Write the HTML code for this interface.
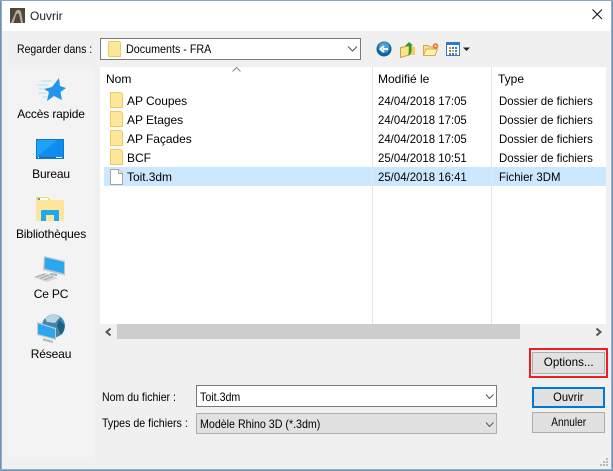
<!DOCTYPE html>
<html><head><meta charset="utf-8">
<style>
html,body{margin:0;padding:0;width:613px;height:471px;overflow:hidden;background:#f0f0f0}
body{position:relative;font-family:"Liberation Sans",sans-serif;font-size:12px;color:#000}
.a{position:absolute}
.t{position:absolute;white-space:nowrap;line-height:14px;height:14px;transform-origin:0 50%}
.d{transform:scaleX(.95)}
.n{letter-spacing:-.05px}
.l{transform:scaleX(.885)}
.c{position:absolute;white-space:nowrap;line-height:14px;height:14px;text-align:center;width:94px;left:4px;letter-spacing:-.15px}
.btn{position:absolute;box-sizing:border-box;left:532px;width:73px;background:#e1e1e1;border:1px solid #adadad;text-align:center}
.btn span{display:inline-block}
svg{position:absolute;overflow:visible}
</style></head><body>
<div class="a" style="left:0;top:0;width:613px;height:31px;background:#fff"></div>
<div class="a" style="left:0;top:0;width:1px;height:471px;background:#6f93b5"></div>
<div class="a" style="left:1px;top:0;width:1px;height:471px;background:#94aec6"></div>
<div class="a" style="right:0;top:0;width:1px;height:471px;background:#6f93b5"></div>
<div class="a" style="right:1px;top:0;width:1px;height:471px;background:#94aec6"></div>
<div class="a" style="left:0;top:0;width:613px;height:1px;background:#8aa6c0"></div>
<div class="a" style="left:0;bottom:0;width:613px;height:1px;background:#6f93b5"></div>
<div class="a" style="left:0;bottom:1px;width:613px;height:1px;background:#94aec6"></div>

<svg style="left:10px;top:8px" width="15" height="15" viewBox="0 0 15 15"><rect width="15" height="15" fill="#4e473a"/><path d="M1 15L6 3Q9 0 11 4L13 15H11L9 6Q7.500 4 6 7L3.500 15Z" fill="#b9b09c"/></svg>
<div class="t" style="left:30px;top:9px;color:#222">Ouvrir</div>
<svg style="left:592px;top:9px" width="11" height="11"><path d="M.5.5L10 10M10 .5L.5 10" stroke="#111" stroke-width="1.100" fill="none"/></svg>

<div class="t l" style="left:17px;top:42px;transform:scaleX(.874)">Regarder dans :</div>
<div class="a" style="left:100px;top:38px;width:261px;height:22px;box-sizing:border-box;background:#fff;border:1px solid #7a7a7a"></div>
<svg style="left:108px;top:41px" width="13" height="16"><path d="M.5 1.500Q.5.5 1.500.5H11Q12.500 .5 12.500 2V15.500H1.500Q.5 15.500 .5 14.500Z" fill="#fde79a" stroke="#f0c95f"/></svg>
<div class="t l" style="left:126px;top:42px;transform:scaleX(.895)">Documents - FRA</div>
<svg style="left:347px;top:46px" width="11" height="6"><path d="M1 .5L5.500 5L10 .5" fill="none" stroke="#555"/></svg>

<svg style="left:376px;top:41px" width="16" height="16"><circle cx="8" cy="8" r="7.500" fill="#14629a"/><circle cx="8" cy="6.500" r="5.500" fill="#4d9cd6"/><path d="M12 8H7M8 5L4.500 8L8 11" stroke="#fff" stroke-width="2" fill="none"/></svg>
<svg style="left:400px;top:41px" width="16" height="17"><path d="M.5 6.500L9 5V14L.5 16.500Z" fill="#fbe28c" stroke="#c9a13f"/><path d="M9 5L15 6V14H9Z" fill="#f4cf63"/><path d="M5 5L9 1L13 4.500H11.500V10Q11 14 8 14.500Q9.500 11 9 5Z" fill="#2d9a2b"/></svg>
<svg style="left:423px;top:43px" width="16" height="13"><path d="M.5 2.500H5L6.500 4H12V12.500H.5Z" fill="#f9e08a" stroke="#d2ab4c"/><path d="M.5 12.500L3 6H14.500L12 12.500Z" fill="#fff0b0" stroke="#d2ab4c"/><circle cx="12.500" cy="3" r="2.800" fill="#ef6b3a"/><circle cx="12.500" cy="3" r="1.200" fill="#ffe0a0"/></svg>
<svg style="left:446px;top:42px" width="24" height="15"><rect x=".5" y=".5" width="13" height="13" fill="#fff" stroke="#2f78cc"/><rect x="1" y="1" width="12" height="2" fill="#2f78cc"/><rect x="3" y="5" width="2" height="2" fill="#e07b3a"/><rect x="6" y="5" width="2" height="2" fill="#3b78c4"/><rect x="9" y="5" width="2" height="2" fill="#3b78c4"/><rect x="3" y="8" width="2" height="2" fill="#55a24a"/><rect x="6" y="8" width="2" height="2" fill="#d9a93a"/><rect x="9" y="8" width="2" height="2" fill="#3b78c4"/><rect x="3" y="11" width="2" height="2" fill="#7a7a7a"/><rect x="6" y="11" width="2" height="2" fill="#3b78c4"/><rect x="9" y="11" width="2" height="2" fill="#e07b3a"/><path d="M17 5.500H24L20.500 9Z" fill="#222"/></svg>

<div class="a" style="left:7px;top:67px;width:87px;height:390px;background:#f3f3f3"></div>
<svg style="left:35px;top:77px" width="32" height="28"><path d="M24 1L25 9L31 11L25.500 15L27 23L19 19L12 24L14 15L9 12L17 10Z" fill="#1e97ec"/><path d="M6 4H17M2 8H13M4 12H10M3 16H11M8 20H13" stroke="#b4dcf6" stroke-width="1"/></svg>
<div class="c" style="top:107px">Accès rapide</div>
<svg style="left:36px;top:139px" width="28" height="20"><rect width="28" height="20" fill="#1378c0"/><rect x="1" y="1" width="26" height="17" fill="#0f8cf0"/><path d="M1 18V1H21Z" fill="#1ea3fb"/><rect x="1" y="18" width="26" height="1" fill="#0a6fb8"/><path d="M2 18.500h1M20 18.500h6" stroke="#fff"/></svg>
<div class="c" style="top:167px">Bureau</div>
<svg style="left:36px;top:197px" width="28" height="24"><path d="M0 0H12L13.500 2H14V24H0Z" fill="#fcd768"/><rect x="0" y="3" width="28" height="21" fill="#fde59c"/><rect x="2" y="1" width="10" height="2" fill="#fff"/><rect x="2" y="1" width="2" height="2" fill="#25a9e0"/><path d="M5 24V14Q5 13 6 13H22Q23 13 23 14V24H18V18H10V24Z" fill="#22a8ee"/></svg>
<div class="c" style="top:227px">Bibliothèques</div>
<svg style="left:33px;top:255px" width="33" height="28"><path d="M11 1L32 6V20.500L10 15Z" fill="#bfc7cc"/><path d="M12 2.500L31 7V18.500L11.500 13.500Z" fill="#2ba7ef"/><path d="M24 19L24 21L17 20L17 18Z" fill="#aab0b4"/><path d="M0 22L12 18L25 23L14 27Z" fill="#d4d6d8"/><path d="M3 22L12 19M7 23.500L16 20M11 25L20 21.500" stroke="#a4a8ab" stroke-width="1"/></svg>
<div class="c" style="top:287px">Ce PC</div>
<svg style="left:36px;top:314px" width="29" height="30"><circle cx="17.500" cy="12" r="11.500" fill="#3e86ae"/><path d="M9 4Q17-2 24 3L19 9L11 8Z" fill="#b6d6e4"/><path d="M23 6L28.500 11Q28.500 18 25 21L21 12Z" fill="#1f5f86"/><path d="M1 8L20 14V26L1 21Z" fill="#c3c9ce"/><path d="M2 9.500L19 15V24.500L2 20Z" fill="#2ba7ef"/><path d="M7 24L17 27V29L7 26.500Z" fill="#b5babd"/></svg>
<div class="c" style="top:347px">Réseau</div>

<div class="a" style="left:100px;top:67px;width:506px;height:257px;background:#fff"></div>
<div class="a" style="left:104px;top:167px;width:502px;height:19px;background:#cce8ff"></div>
<div class="a" style="left:372px;top:67px;width:1px;height:257px;background:#e5e5e5"></div>
<div class="a" style="left:491px;top:67px;width:1px;height:257px;background:#e5e5e5"></div>
<svg style="left:232px;top:67px" width="9" height="5"><path d="M.5 4.500L4.500 .5L8.500 4.500" fill="none" stroke="#888"/></svg>
<div class="t" style="left:106px;top:72px">Nom</div>
<div class="t" style="left:378px;top:72px">Modifié le</div>
<div class="t" style="left:498px;top:72px">Type</div>

<svg style="left:110px;top:92px" width="13" height="84">
<g fill="#fde79a" stroke="#f0c95f"><path d="M.5.500H9.500Q12.500.500 12.500 3.500V15.500H.5Z"/><path d="M.5 19.500H9.500Q12.500 19.500 12.500 22.500V34.500H.5Z"/><path d="M.5 38.500H9.500Q12.500 38.500 12.500 41.500V53.500H.5Z"/><path d="M.5 57.500H9.500Q12.500 57.500 12.500 60.500V72.500H.5Z"/></g>
</svg>
<svg style="left:110px;top:169px" width="13" height="16"><path d="M.5.500H8.500L12.500 4.500V15.500H.5Z" fill="#fff" stroke="#a5a5a5"/><path d="M8.500.5V4.500H12.500" fill="#eee" stroke="#a5a5a5"/></svg>

<div class="t n" style="left:127px;top:94px">AP Coupes</div>
<div class="t n" style="left:127px;top:113px">AP Etages</div>
<div class="t n" style="left:127px;top:132px">AP Façades</div>
<div class="t n" style="left:127px;top:151px">BCF</div>
<div class="t n" style="left:127px;top:170px">Toit.3dm</div>
<div class="t d" style="left:378px;top:94px">24/04/2018 17:05</div>
<div class="t d" style="left:378px;top:113px">24/04/2018 17:05</div>
<div class="t d" style="left:378px;top:132px">24/04/2018 17:05</div>
<div class="t d" style="left:378px;top:151px">25/04/2018 10:51</div>
<div class="t d" style="left:378px;top:170px">25/04/2018 16:41</div>
<div class="t d" style="left:499px;top:94px">Dossier de fichiers</div>
<div class="t d" style="left:499px;top:113px">Dossier de fichiers</div>
<div class="t d" style="left:499px;top:132px">Dossier de fichiers</div>
<div class="t d" style="left:499px;top:151px">Dossier de fichiers</div>
<div class="t d" style="left:499px;top:170px">Fichier 3DM</div>

<div class="a" style="left:117px;top:324px;width:403px;height:15px;background:#cdcdcd"></div>
<svg style="left:105px;top:328px" width="7" height="8"><path d="M5.500 .5L1.500 4L5.500 7.500" fill="none" stroke="#555" stroke-width="2"/></svg>
<svg style="left:595px;top:328px" width="7" height="8"><path d="M1.500 .5L5.500 4L1.500 7.500" fill="none" stroke="#555" stroke-width="2"/></svg>

<div class="a" style="left:529px;top:348px;width:79px;height:30px;box-sizing:border-box;border:2px solid #ee1c25"></div>
<div class="btn" style="top:352px;height:22px;line-height:19px"><span style="transform:scaleX(.97)">Options...</span></div>

<div class="t l" style="left:102px;top:390px;transform:scaleX(.88)">Nom du fichier :</div>
<div class="a" style="left:196px;top:385px;width:301px;height:22px;box-sizing:border-box;background:#fff;border:1px solid #7a7a7a"></div>
<div class="t l" style="left:200px;top:390px;transform:scaleX(.889)">Toit.3dm</div>
<svg style="left:485px;top:394px" width="10" height="6"><path d="M1 .5L4.500 4.500L8.500 .5" fill="none" stroke="#555"/></svg>

<div class="t l" style="left:102px;top:416px;transform:scaleX(.887)">Types de fichiers :</div>
<div class="a" style="left:196px;top:413px;width:301px;height:21px;box-sizing:border-box;background:#e1e1e1;border:1px solid #adadad"></div>
<div class="t l" style="left:200px;top:417px;transform:scaleX(.889)">Modèle Rhino 3D (*.3dm)</div>
<svg style="left:485px;top:422px" width="10" height="6"><path d="M1 .5L4.500 4.500L8.500 .5" fill="none" stroke="#555"/></svg>

<div class="btn" style="top:387px;height:21px;line-height:17px;border:2px solid #0078d7"><span style="transform:scaleX(.93)">Ouvrir</span></div>
<div class="btn" style="top:412px;height:21px;line-height:19px"><span style="transform:scaleX(.84)">Annuler</span></div>

<svg style="left:600px;top:458px" width="10" height="10" fill="#b8b8b8"><rect x="6" y="0" width="2" height="2"/><rect x="3" y="3" width="2" height="2"/><rect x="6" y="3" width="2" height="2"/><rect x="0" y="6" width="2" height="2"/><rect x="3" y="6" width="2" height="2"/><rect x="6" y="6" width="2" height="2"/></svg>
</body></html>
